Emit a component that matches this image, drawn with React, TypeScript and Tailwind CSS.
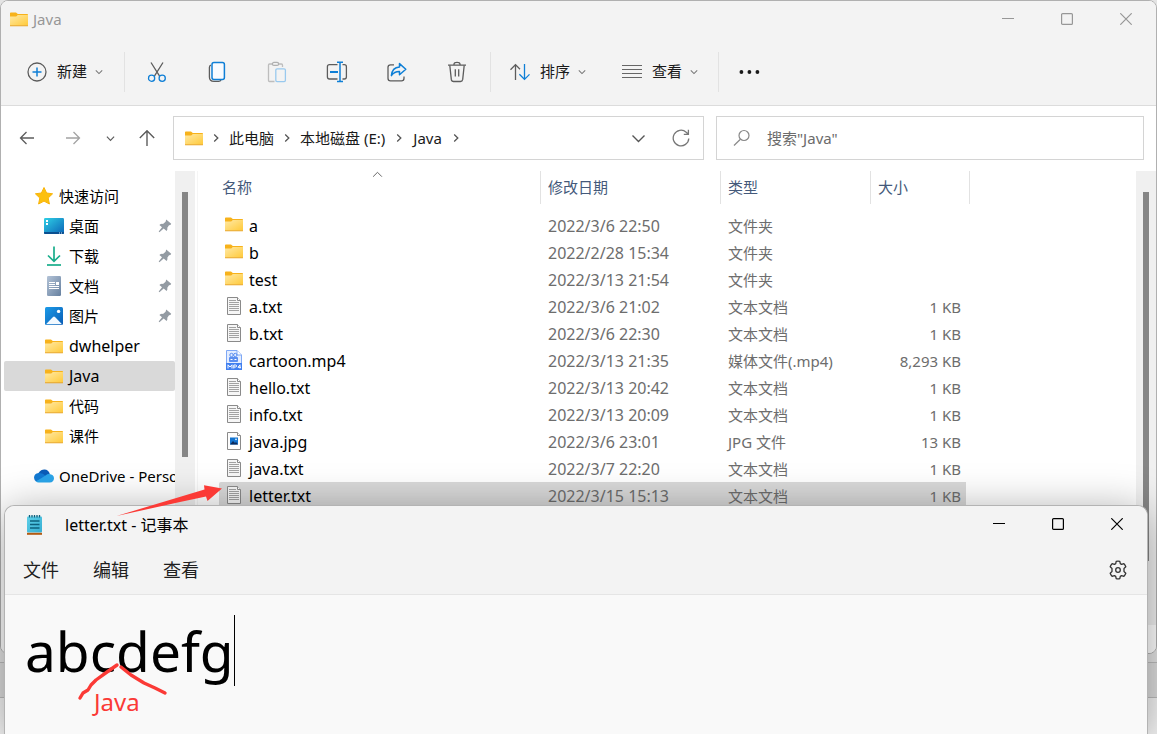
import * as React from "react"
import clsx from "clsx"

type FileKind = "folder" | "text" | "video" | "image"

interface FileEntry {
  name: string
  kind: FileKind
  modified: string
  type: string
  size?: string
}

interface QuickItem {
  label: string
  icon: React.ReactNode
  pinned?: boolean
}

const files: FileEntry[] = [
  { name: "a", kind: "folder", modified: "2022/3/6 22:50", type: "文件夹" },
  { name: "b", kind: "folder", modified: "2022/2/28 15:34", type: "文件夹" },
  { name: "test", kind: "folder", modified: "2022/3/13 21:54", type: "文件夹" },
  { name: "a.txt", kind: "text", modified: "2022/3/6 21:02", type: "文本文档", size: "1 KB" },
  { name: "b.txt", kind: "text", modified: "2022/3/6 22:30", type: "文本文档", size: "1 KB" },
  { name: "cartoon.mp4", kind: "video", modified: "2022/3/13 21:35", type: "媒体文件(.mp4)", size: "8,293 KB" },
  { name: "hello.txt", kind: "text", modified: "2022/3/13 20:42", type: "文本文档", size: "1 KB" },
  { name: "info.txt", kind: "text", modified: "2022/3/13 20:09", type: "文本文档", size: "1 KB" },
  { name: "java.jpg", kind: "image", modified: "2022/3/6 23:01", type: "JPG 文件", size: "13 KB" },
  { name: "java.txt", kind: "text", modified: "2022/3/7 22:20", type: "文本文档", size: "1 KB" },
  { name: "letter.txt", kind: "text", modified: "2022/3/15 15:13", type: "文本文档", size: "1 KB" },
]

/* ---------- icons ---------- */

const FolderIcon = () => (
  <svg width="18" height="15" viewBox="0 0 18 15">
    <defs>
      <linearGradient id="folder" x1="0" y1="0" x2="1" y2="1">
        <stop offset="0" stopColor="#ffe9a6" />
        <stop offset="1" stopColor="#ffca3a" />
      </linearGradient>
    </defs>
    <path d="M0 1.2Q0 .5.8.5H6L7.8 2H17.2Q18 2 18 2.8V6H0Z" fill="#f7b21b" />
    <path d="M0 4.6H6.2L7.8 3H18V13.4H0Z" fill="url(#folder)" />
    <path d="M0 13.2H18V13.7Q18 14.3 17.4 14.3H.6Q0 14.3 0 13.7Z" fill="#e9a41f" />
  </svg>
)

const TextFileIcon = () => (
  <svg width="16" height="18" viewBox="0 0 16 18">
    <path d="M1.5 .5H11.5L14.5 3.5V17.5H1.5Z" fill="#f6f6f6" stroke="#8a8a8a" />
    <path d="M11.5.5V3.5H14.5" fill="#fff" stroke="#8a8a8a" />
    <path d="M3 3.5H10M3 5.5H13M3 7.5H13M3 9.5H13M3 11.5H13M3 13.5H13" stroke="#a2a2a2" />
  </svg>
)

const ImageFileIcon = () => (
  <svg width="16" height="18" viewBox="0 0 16 18">
    <path d="M1.5 .5H11.5L14.5 3.5V17.5H1.5Z" fill="#fdfdfd" stroke="#8a8a8a" />
    <path d="M11.5.5V3.5H14.5" fill="#fff" stroke="#8a8a8a" />
    <rect x="4" y="5.5" width="8" height="7" fill="#1273cf" />
    <path d="M4 12.5L7 9L9 11L10 10L12 12.5Z" fill="#0b2a5c" />
    <circle cx="10" cy="7.3" r=".9" fill="#e6f3ff" />
  </svg>
)

const VideoFileIcon = () => (
  <svg width="18" height="20" viewBox="0 0 18 20">
    <path d="M1.5 .5H12L16.5 5V19H1.5Z" fill="#e3edff" stroke="#7fa8f5" />
    <path d="M12 .5V5H16.5" fill="#fff" stroke="#7fa8f5" />
    <rect x="4" y="7" width="9" height="5" rx="1" fill="#5a8ef0" />
    <circle cx="6.5" cy="5" r="1.7" fill="none" stroke="#5a8ef0" />
    <circle cx="10.3" cy="5" r="1.7" fill="none" stroke="#5a8ef0" />
    <path d="M5.5 9.5H7.5M9.5 9.5H11.5" stroke="#fff" />
    <rect x="1" y="13" width="16" height="7" fill="#3f7ff0" />
    <path d="M3 18.5V14.8L5 17L7 14.8V18.5M8.8 18.5V15H10.5Q11.6 15 11.6 16T10.5 17H8.8M15 18.5V14.8L13 17.3H16" fill="none" stroke="#fff" />
  </svg>
)

const StarIcon = () => (
  <svg width="20" height="20" viewBox="0 0 20 20">
    <path d="M10 1.5L12.6 7L18.6 7.8L14.2 12L15.4 18L10 15.1L4.6 18L5.8 12L1.4 7.8L7.4 7Z" fill="#fcc00f" stroke="#f9b40a" strokeLinejoin="round" />
  </svg>
)

const DesktopIcon = () => (
  <svg width="20" height="16" viewBox="0 0 20 16">
    <defs>
      <linearGradient id="desk" x1="0" y1="0" x2="1" y2="1">
        <stop offset="0" stopColor="#2fd0e6" />
        <stop offset="1" stopColor="#0b63b6" />
      </linearGradient>
    </defs>
    <rect width="20" height="16" rx="1.2" fill="url(#desk)" />
    <path d="M0 14H20V15Q20 16 19 16H1Q0 16 0 15Z" fill="#0b4f8f" />
    <path d="M2 3H4M2 6H4" stroke="#fff" strokeWidth="2" />
    <path d="M15 15H16M17 15H18" stroke="#cfe8ff" />
  </svg>
)

const DownloadIcon = () => (
  <svg width="16" height="20" viewBox="0 0 16 20" fill="none" stroke="#18ad8b" strokeWidth="1.7">
    <path d="M8 .5V15M2 9.5L8 15.3L14 9.5" />
    <path d="M1 19H15" />
  </svg>
)

const DocumentIcon = () => (
  <svg width="14" height="20" viewBox="0 0 14 20">
    <defs>
      <linearGradient id="doc" x1="0" y1="0" x2="1" y2="1">
        <stop offset="0" stopColor="#b3c3d7" />
        <stop offset="1" stopColor="#66809f" />
      </linearGradient>
    </defs>
    <rect width="14" height="20" rx="1.2" fill="url(#doc)" />
    <path d="M2 6.5H8M2 8.5H8M2 10.5H12M2 12.5H12" stroke="#fff" />
    <rect x="9" y="6" width="3" height="3" fill="#fff" />
  </svg>
)

const PictureIcon = () => (
  <svg width="18" height="18" viewBox="0 0 18 18">
    <defs>
      <linearGradient id="pic" x1="0" y1="0" x2="1" y2="1">
        <stop offset="0" stopColor="#1c9be8" />
        <stop offset="1" stopColor="#0a5cb5" />
      </linearGradient>
    </defs>
    <rect width="18" height="18" rx="1.5" fill="url(#pic)" />
    <path d="M1 17.3L8 10Q9 9.2 10 10L17 17.3Z" fill="#f2f9ff" />
    <circle cx="13.6" cy="4.4" r="1.7" fill="#fff" />
  </svg>
)

const OneDriveIcon = () => (
  <svg width="20" height="14" viewBox="0 0 20 14">
    <path d="M4.5 4Q7 .5 10.5.6Q14.5.8 15.8 5L10 9L3 12Z" fill="#0a5cb8" />
    <path d="M4.6 4Q0 4.5 0 8.8Q.2 11.2 2 12.6L12 7Q8.5 3.6 4.6 4Z" fill="#1179d3" />
    <path d="M15.2 5Q19.8 5.3 20 9.3Q19.8 13.4 15.8 13.5H4.6Q3 13.4 1.8 12.5L11.6 6.4Q13.4 4.8 15.2 5Z" fill="#2aa5ea" />
  </svg>
)

const PinIcon = () => (
  <svg width="14" height="14" viewBox="0 0 14 14">
    <path d="M8.2.6L13.2 4.8L12.4 6L11 6.2L9.3 8.7Q9.8 10.6 8.6 12L5.7 9.6L1.4 13.2L.7 12.6L4 8.2L1.4 5.9Q3 4.5 5 4.9L7.6 2.8Z" fill="#939ba3" />
  </svg>
)

interface ChevronProps {
  dir: "up" | "down" | "right"
  size?: number
  className?: string
}

const chevronPaths = {
  up: "M1 7L5 3L9 7",
  down: "M1 3L5 7L9 3",
  right: "M3.2 1.5L6.8 5L3.2 8.5",
}

const Chevron = ({ dir, size = 8, className }: ChevronProps) => (
  <svg
    width={size}
    height={size}
    viewBox="0 0 10 10"
    fill="none"
    stroke="currentColor"
    strokeWidth={size > 10 ? 0.9 : 1.3}
    className={className}
  >
    <path d={chevronPaths[dir]} />
  </svg>
)

const ToolIcon = ({ children }: { children: React.ReactNode }) => (
  <svg width="22" height="22" viewBox="0 0 22 22" fill="none" stroke="#5c5c5c" strokeWidth="1.3">
    {children}
  </svg>
)

const tools = [
  {
    label: "剪切",
    icon: (
      <ToolIcon>
        <path d="M5 1.5L13.6 15.2M17 1.5L8.4 15.2" />
        <circle cx="5.6" cy="17.2" r="3.1" stroke="#0f7fd6" />
        <circle cx="16.2" cy="17.2" r="3.1" stroke="#0f7fd6" />
      </ToolIcon>
    ),
  },
  {
    label: "复制",
    icon: (
      <ToolIcon>
        <path d="M5 4Q3.4 4.5 3.4 6.5V16Q3.4 20.4 8 20.4H12.6Q14.4 20.4 15 19" />
        <rect x="6" y="1.4" width="12.4" height="17" rx="2" fill="#f8fbff" stroke="#0f7fd6" strokeWidth="1.5" />
      </ToolIcon>
    ),
  },
  {
    label: "粘贴",
    disabled: true,
    icon: (
      <ToolIcon>
        <path d="M6.5 3H3.5Q2.5 3 2.5 4V19.5Q2.5 20.5 3.5 20.5H8.5M12.5 3H15.5Q16.5 3 16.5 4V6" stroke="#bdbdbd" />
        <rect x="6.4" y="1.4" width="6.2" height="3" rx="1.5" stroke="#b0b0b0" />
        <rect x="9.8" y="7.8" width="9.6" height="12.8" rx="1.3" stroke="#99c9ee" />
      </ToolIcon>
    ),
  },
  {
    label: "重命名",
    icon: (
      <ToolIcon>
        <path d="M11.5 3.7H3.5Q1.4 3.7 1.4 5.8V15.8Q1.4 18 3.5 18H11.5M16.5 3.7H18.3Q20.4 3.7 20.4 5.8V15.8Q20.4 18 18.3 18H16.5" />
        <path d="M14 1.5V20.5M11 1.3H17M11 20.6H17" stroke="#0f7fd6" strokeWidth="1.5" />
        <path d="M4 11H12" stroke="#0f7fd6" strokeWidth="2.2" />
      </ToolIcon>
    ),
  },
  {
    label: "共享",
    icon: (
      <ToolIcon>
        <path d="M8 3.8H4.5Q2 3.8 2 6.3V17.2Q2 19.8 4.5 19.8H15.5Q18 19.8 18 17.2V15.5" />
        <path d="M13.5 2.6L19.8 8.2L13.5 13.8V10.6Q8.6 10.4 5.4 14.6Q6 6.4 13.5 5.9Z" stroke="#0f7fd6" strokeWidth="1.5" strokeLinejoin="round" />
      </ToolIcon>
    ),
  },
  {
    label: "删除",
    icon: (
      <ToolIcon>
        <path d="M2 4.2H20M8 4V3Q8.2 1.3 11 1.3Q13.8 1.3 14 3V4" />
        <path d="M3.8 4.4L5.3 18.4Q5.6 20.5 7.6 20.5H14.4Q16.4 20.5 16.7 18.4L18.2 4.4M9.3 8.2V15.4M12.7 8.2V15.4" />
      </ToolIcon>
    ),
  },
]

const NotepadIcon = () => (
  <svg width="16" height="20" viewBox="0 0 16 20">
    <defs>
      <linearGradient id="note" x1="0" y1="0" x2="1" y2="1">
        <stop offset="0" stopColor="#5fd0e8" />
        <stop offset="1" stopColor="#35aed3" />
      </linearGradient>
    </defs>
    <rect y="1.5" width="15" height="16" rx="1" fill="url(#note)" />
    <path d="M2.5 0V2.5M5 0V2.5M7.5 0V2.5M10 0V2.5M12.5 0V2.5" stroke="#0b5f7c" strokeWidth="1.3" />
    <path d="M3 6H12.5M3 9.5H12.5M3 13H12.5" stroke="#0d617e" strokeWidth="1.4" />
    <rect y="17.8" width="15" height="2" fill="#b35a12" />
  </svg>
)

const GearIcon = () => (
  <svg width="20" height="20" viewBox="0 0 20 20" fill="none" stroke="#333" strokeWidth="1.3" strokeLinejoin="round">
    <path d="M8.2 1.3Q10 .8 11.8 1.3L12.3 3.6L13.6 4.4L15.9 3.7Q17.2 5 17.8 6.8L16 8.4V11.6L17.8 13.2Q17.2 15 15.9 16.3L13.6 15.6L12.3 16.4L11.8 18.7Q10 19.2 8.2 18.7L7.7 16.4L6.4 15.6L4.1 16.3Q2.8 15 2.2 13.2L4 11.6V8.4L2.2 6.8Q2.8 5 4.1 3.7L6.4 4.4L7.7 3.6Z" />
    <circle cx="10" cy="10" r="2.3" />
  </svg>
)

const fileIcons: Record<FileKind, React.ReactNode> = {
  folder: <FolderIcon />,
  text: <TextFileIcon />,
  video: <VideoFileIcon />,
  image: <ImageFileIcon />,
}

const quickItems: QuickItem[] = [
  { label: "桌面", icon: <DesktopIcon />, pinned: true },
  { label: "下载", icon: <DownloadIcon />, pinned: true },
  { label: "文档", icon: <DocumentIcon />, pinned: true },
  { label: "图片", icon: <PictureIcon />, pinned: true },
  { label: "dwhelper", icon: <FolderIcon /> },
  { label: "Java", icon: <FolderIcon /> },
  { label: "代码", icon: <FolderIcon /> },
  { label: "课件", icon: <FolderIcon /> },
]

/* ---------- shared parts ---------- */

// CJK labels sit at 15px, plain latin ones need a pixel more to look even
const textSize = (label: string) => (/[\u4e00-\u9fff]/.test(label) ? "text-[15px]" : "text-[16px]")

const WindowButtons = ({ className }: { className?: string }) => (
  <div className={clsx("mr-px flex h-9 self-start", className)}>
    <button aria-label="最小化" className="flex w-[59px] items-center justify-center">
      <svg width="12" height="12" viewBox="0 0 12 12" stroke="currentColor"><path d="M0 5.5H12" /></svg>
    </button>
    <button aria-label="最大化" className="flex w-[59px] items-center justify-center">
      <svg width="12" height="12" viewBox="0 0 12 12" fill="none" stroke="currentColor" strokeWidth="1.2"><rect x=".6" y=".6" width="10.8" height="10.8" rx="1" /></svg>
    </button>
    <button aria-label="关闭" className="flex w-[59px] items-center justify-center">
      <svg width="12" height="12" viewBox="0 0 12 12" stroke="currentColor" strokeWidth="1.2"><path d="M.3.3L11.7 11.7M11.7.3L.3 11.7" /></svg>
    </button>
  </div>
)

const Separator = ({ className }: { className?: string }) => (
  <div className={clsx("h-10 w-px bg-[#e2e2e2]", className)} />
)

/* ---------- explorer ---------- */

const Toolbar = () => (
  <div className="flex h-[68px] items-center border-b border-[#dcdcdc] pl-[26px] text-[15px] text-[#1a1a1a]">
    <button className="flex items-center gap-2.5">
      <svg width="20" height="20" viewBox="0 0 20 20" fill="none" strokeWidth="1.3">
        <circle cx="10" cy="10" r="9" stroke="#5c5c5c" />
        <path d="M5.5 10H14.5M10 5.5V14.5" stroke="#0f7fd6" strokeWidth="1.5" />
      </svg>
      <span>新建</span>
      <Chevron dir="down" className="-ml-0.5 text-[#777]" />
    </button>
    <Separator className="ml-[21px] mr-0.5" />
    {tools.map((tool) => (
      <button key={tool.label} aria-label={tool.label} disabled={tool.disabled} className="flex w-[60px] justify-center">
        {tool.icon}
      </button>
    ))}
    <Separator className="ml-[3px]" />
    <button className="ml-[19px] flex items-center gap-2.5">
      <svg width="20" height="20" viewBox="1 0 20 20" fill="none" stroke="#5c5c5c" strokeWidth="1.3">
        <path d="M6.5 18V3M1.5 7.8L6.5 2.6L11 7.2" />
        <path d="M15.5 2V17M10.4 12.2L15.5 17.4L20.5 12.4" stroke="#0f7fd6" />
      </svg>
      <span>排序</span>
      <Chevron dir="down" className="-ml-0.5 text-[#777]" />
    </button>
    <button className="ml-9 flex items-center gap-2.5">
      <svg width="20" height="14" viewBox="0 0 20 14" stroke="#666">
        <path d="M0 .5H20M0 4.5H20M0 8.5H20M0 12.5H20" />
      </svg>
      <span>查看</span>
      <Chevron dir="down" className="-ml-0.5 text-[#777]" />
    </button>
    <Separator className="ml-5" />
    <button aria-label="更多" className="ml-5">
      <svg width="21" height="6" viewBox="0 0 21 6" fill="#1a1a1a">
        <circle cx="2.4" cy="3" r="1.9" />
        <circle cx="10.4" cy="3" r="1.9" />
        <circle cx="18.4" cy="3" r="1.9" />
      </svg>
    </button>
  </div>
)

const AddressRow = () => (
  <div className="flex pl-3.5 pr-3 pt-2.5">
    <div className="flex w-[158px] items-center text-[#5c5c5c]">
      <button aria-label="后退" className="w-[23px]">
        <svg width="16" height="16" viewBox="0 0 16 16" fill="none" stroke="currentColor" strokeWidth="1.3" className="ml-1"><path d="M15 8H1.5M7.5 2L1.5 8L7.5 14" /></svg>
      </button>
      <button aria-label="前进" className="ml-[23px] w-[23px] text-[#a3a3a3]">
        <svg width="16" height="16" viewBox="0 0 16 16" fill="none" stroke="currentColor" strokeWidth="1.3" className="ml-1"><path d="M1 8H14.5M8.5 2L14.5 8L8.5 14" /></svg>
      </button>
      <button aria-label="最近位置" className="ml-[22px]">
        <Chevron dir="down" size={9} />
      </button>
      <button aria-label="向上" className="ml-[23px]">
        <svg width="18" height="18" viewBox="0 0 18 18" fill="none" stroke="currentColor" strokeWidth="1.4"><path d="M9 17V2M1.8 9L9 1.8L16.2 9" /></svg>
      </button>
    </div>
    <div className="grid h-11 flex-1 grid-cols-[531fr_428fr] gap-3">
      <nav aria-label="地址" className="flex items-center border border-[#d4d4d4] bg-white pl-[11px] text-[15px] whitespace-nowrap text-[#1a1a1a]">
        <FolderIcon />
        <Chevron dir="right" size={10} className="mx-2 text-[#555]" />
        <a href="#pc">此电脑</a>
        <Chevron dir="right" size={10} className="mx-2 text-[#555]" />
        <a href="#e">本地磁盘 (E:)</a>
        <Chevron dir="right" size={10} className="mx-[9px] text-[#555]" />
        <a href="#java">Java</a>
        <Chevron dir="right" size={10} className="mx-[9px] text-[#555]" />
        <button aria-label="历史记录" className="ml-auto">
          <Chevron dir="down" size={15} className="text-[#555]" />
        </button>
        <button aria-label="刷新" className="mr-[13px] ml-[26px]">
          <svg width="18" height="18" viewBox="0 0 18 18" fill="none" stroke="#777" strokeWidth="1.3">
            <path d="M16.8 9.5A7.8 7.8 0 1 1 14.2 3.2L16.2 5M16.4 .8V5.3H11.8" />
          </svg>
        </button>
      </nav>
      <label className="flex items-center border border-[#d4d4d4] bg-white pl-4">
        <svg width="18" height="18" viewBox="0 0 18 18" fill="none" stroke="#888" strokeWidth="1.2" className="shrink-0">
          <circle cx="11" cy="6.5" r="5" />
          <path d="M7.4 10.2L1 16.5" />
        </svg>
        <input aria-label="搜索" placeholder={'搜索"Java"'} className="ml-4 w-full min-w-0 text-[15px] outline-none placeholder:text-[#6b6b6b]" />
      </label>
    </div>
  </div>
)

const Sidebar = () => (
  <aside className="w-[174px] overflow-hidden pt-2.5 pl-[3px] text-black">
    <div className="flex h-[30px] items-center gap-[5px] pl-[30px] text-[15px]">
      <StarIcon />
      快速访问
    </div>
    <ul>
      {quickItems.map((item) => (
        <li
          key={item.label}
          className={clsx(
            "flex h-[30px] items-center gap-[5px] rounded-xs pr-[3px] pl-10",
            textSize(item.label),
            item.label === "Java" && "bg-[#d9d9d9]"
          )}
        >
          <span className="flex w-5 shrink-0 justify-center">{item.icon}</span>
          <span className="flex-1">{item.label}</span>
          {item.pinned && <PinIcon />}
        </li>
      ))}
    </ul>
    <div className="mt-2.5 flex h-[30px] items-center gap-[5px] pl-[30px] text-[15px] whitespace-nowrap">
      <span className="shrink-0"><OneDriveIcon /></span>
      OneDrive - Personal
    </div>
  </aside>
)

const headCell = "h-[33px] border-l border-[#e2e2e2] pl-[7px] text-left text-[15px] font-normal text-[#44597a]"

const FileTable = () => (
  <table className="ml-[21px] w-[751px] table-fixed border-separate border-spacing-0">
    <thead>
      <tr>
        <th className="relative h-[33px] w-[321px] pl-[3px] text-left text-[15px] font-normal text-[#44597a]">
          名称
          <Chevron dir="up" size={11} className="absolute -top-0.5 left-[153px] text-[#666]" />
        </th>
        <th className={clsx(headCell, "w-[180px]")}>修改日期</th>
        <th className={clsx(headCell, "w-[150px]")}>类型</th>
        <th className={clsx(headCell, "w-[100px] border-r")}>大小</th>
      </tr>
      <tr aria-hidden="true"><td className="h-2" /></tr>
    </thead>
    <tbody>
      {files.map((file) => {
        const bg = file.name === "letter.txt" && "bg-[#d9d9d9]"
        return (
          <tr key={file.name} className="h-[27px] text-[16px] leading-6 whitespace-nowrap text-[#6d6d6d]">
            <td className={clsx("rounded-l-xs", bg)}>
              <span className="flex items-center gap-[5px] pl-[5px] text-black">
                <span className="flex w-5 justify-center pb-0.5">{fileIcons[file.kind]}</span>
                {file.name}
              </span>
            </td>
            <td className={clsx("pl-2", bg)}>{file.modified}</td>
            <td className={clsx("pl-2 text-[15px]", bg)}>{file.type}</td>
            <td className={clsx("border-r-4 border-transparent bg-clip-padding pr-[5px] text-right text-[15px]", bg)}>{file.size}</td>
          </tr>
        )
      })}
    </tbody>
  </table>
)

const Explorer = () => (
  <section className="absolute inset-x-0 top-0 bottom-20 flex flex-col overflow-hidden rounded-lg border border-[#b0b0b0] bg-white">
    <div className="bg-[#f3f3f3]">
      <header className="flex h-[37px] items-center pl-[9px] text-[15px] text-[#979797]">
        <FolderIcon />
        <h1 className="ml-[5px]">Java</h1>
        <WindowButtons className="ml-auto" />
      </header>
      <Toolbar />
    </div>
    <AddressRow />
    <main className="mt-[11px] flex min-h-0 flex-1">
      <Sidebar />
      <div className="w-5 bg-[#f0f0f0]">
        <div className="mx-auto mt-[21px] h-[265px] w-1.5 bg-[#868686]" />
      </div>
      <div className="ml-0.5 flex-1 overflow-hidden border-l border-[#f5f5f5]">
        <FileTable />
      </div>
      <div className="w-5 bg-[#f0f0f0]">
        <div className="mx-auto mt-[21px] h-[369px] w-1.5 bg-[#868686]" />
      </div>
    </main>
    <footer className="h-7 shrink-0 bg-white" />
  </section>
)

/* ---------- notepad ---------- */

const Notepad = () => (
  <section className="absolute top-[505px] right-[9px] bottom-0 left-1 flex flex-col rounded-t-[10px] border border-b-0 border-[#b3b3b3] bg-[#f9f9f9] shadow-[0_6px_44px_rgba(0,0,0,0.36)]">
    <div className="rounded-t-[10px] border-b border-[#e5e5e5] bg-[#f3f3f3]">
      <header className="flex h-[38px] items-center pl-[22px] text-black">
        <NotepadIcon />
        <h2 className="ml-[22px] text-[16px]">letter.txt - 记事本</h2>
        <WindowButtons className="ml-auto" />
      </header>
      <div className="flex h-[50px] items-center gap-[34px] pt-0.5 pr-[19px] pl-[18px] text-[18px] text-[#1f1f1f]">
        <button>文件</button>
        <button>编辑</button>
        <button>查看</button>
        <button aria-label="设置" className="ml-auto"><GearIcon /></button>
      </div>
    </div>
    <textarea
      aria-label="文本编辑器"
      defaultValue="abcdefg"
      spellCheck={false}
      className="w-full flex-1 resize-none overflow-hidden pt-5 pl-5 text-[55px] leading-[72px] text-black outline-none"
    />
    {/* text cursor */}
    <div className="absolute top-[109px] left-[229px] h-[71px] w-px bg-black" />
  </section>
)

// hand-drawn marks on top of both windows
const Annotations = () => (
  <>
    <svg width="240" height="225" viewBox="0 0 240 225" className="pointer-events-none absolute top-[480px] left-0">
      <path d="M116.5 36L204.5 9.5L204 5.3L222 8.5L207.5 21L206 16.5L180 22Z" fill="#fb3a36" />
      <g fill="none" stroke="#fb3a36" strokeWidth="3.4" strokeLinecap="round" strokeLinejoin="round">
        <path d="M117 185L107 192L96 200L91 205L88 210L83 213L80 218" />
        <path d="M121 187L131 195L144 203L155 208L165 213" />
      </g>
    </svg>
    <span className="absolute top-[686px] left-[94px] text-[24px] leading-8 text-[#fb3a36]">Java</span>
  </>
)

const App = () => (
  <div className="relative flex h-screen w-full flex-col justify-end overflow-hidden bg-[#e4e4e4] font-['Noto_Sans','Noto_Sans_CJK_SC',sans-serif]">
    <div className="h-9 border-y border-[#bdbdbd] bg-[#dedede]" />
    <div className="h-9 bg-[#f4f4f4]" />
    <Explorer />
    <Notepad />
    <Annotations />
  </div>
)

export default App
